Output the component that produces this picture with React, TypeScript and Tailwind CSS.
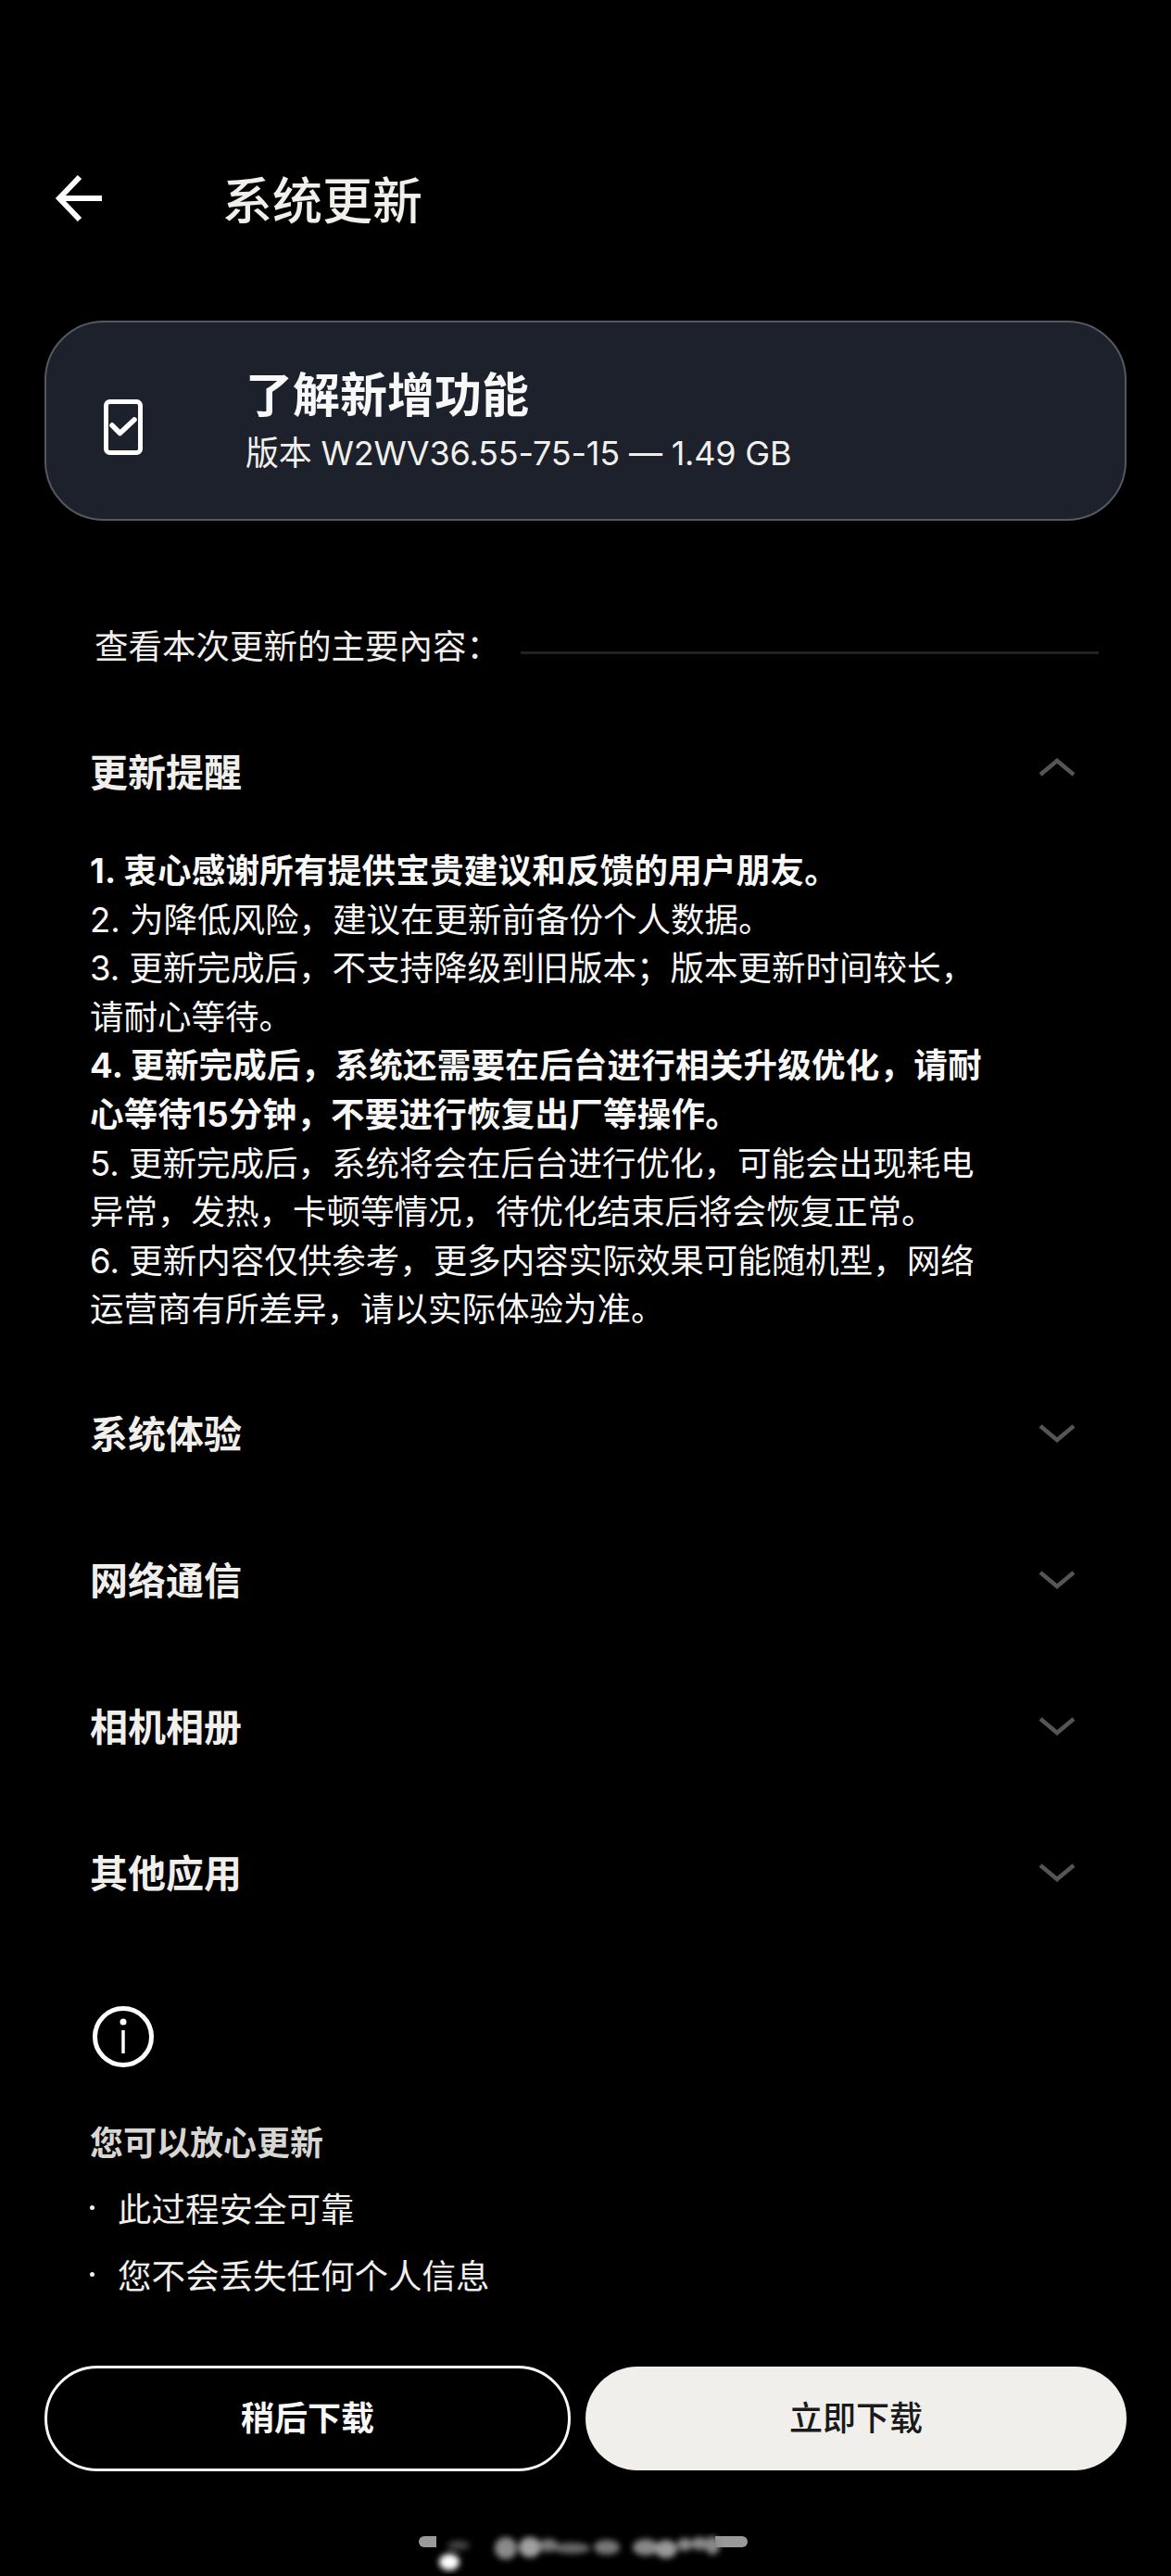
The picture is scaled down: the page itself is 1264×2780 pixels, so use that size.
import React from "react";

const font = { fontFamily: '"Inter", "Noto Sans CJK SC", sans-serif' };

function Chevron({ up }: { up?: boolean }) {
  return (
    <svg className={up ? "mb-[12px]" : "mb-[2px]"} width="40" height="22" viewBox="0 0 40 22" fill="none" stroke="#555555" strokeWidth="4.5">
      <path d={up ? "M2 19 L20 4 L38 19" : "M2 3 L20 18 L38 3"} />
    </svg>
  );
}

function Section({ title, up }: { title: string; up?: boolean }) {
  return (
    <div className="flex h-[158px] items-center justify-between pl-[97px] pr-[103px]">
      <span className="text-[41px] leading-[56px] font-semibold text-[#f1efec]">{title}</span>
      <Chevron up={up} />
    </div>
  );
}

const lines: [string, boolean][] = [
  ["1. 衷心感谢所有提供宝贵建议和反馈的用户朋友。", true],
  ["2. 为降低风险，建议在更新前备份个人数据。", false],
  ["3. 更新完成后，不支持降级到旧版本；版本更新时间较长，请耐心等待。", false],
  ["4. 更新完成后，系统还需要在后台进行相关升级优化，请耐心等待15分钟，不要进行恢复出厂等操作。", true],
  ["5. 更新完成后，系统将会在后台进行优化，可能会出现耗电异常，发热，卡顿等情况，待优化结束后将会恢复正常。", false],
  ["6. 更新内容仅供参考，更多内容实际效果可能随机型，网络运营商有所差异，请以实际体验为准。", false],
];

export default function App() {
  return (
    <div className="flex h-[2780px] w-[1264px] flex-col overflow-hidden bg-black text-white" style={font}>
      <header className="flex h-[346px] items-start pt-[186px]">
        <svg className="ml-[58px]" width="54" height="56" viewBox="0 0 54 56" fill="none" stroke="#ffffff" strokeWidth="6">
          <path d="M28 5 L6 28 L28 51 M6 28 H52" />
        </svg>
        <h1 className="mt-[2px] ml-[128px] text-[54px] leading-[60px] font-medium text-[#f1efec]">系统更新</h1>
      </header>

      <div className="mx-[48px] flex h-[216px] items-center rounded-[64px] border-2 border-[#55585e] bg-[#1c212b]">
        <svg className="mt-[14px] ml-[62px]" width="42" height="60" viewBox="0 0 42 60" fill="none" stroke="#ffffff">
          <rect x="2.5" y="2.5" width="37" height="55" rx="4" strokeWidth="5" />
          <path d="M9 28 L17.5 36.5 L33 22" strokeWidth="5.5" strokeLinecap="round" strokeLinejoin="round" />
        </svg>
        <div className="mt-[3px] ml-[111px]">
          <div className="text-[51px] leading-[62px] font-bold text-[#f8f8f8]">了解新增功能</div>
          <div className="mt-[5px] text-[36px] leading-[52px] tracking-[-0.2px] text-[#f1efec]">版本 W2WV36.55-75-15 — 1.49 GB</div>
        </div>
      </div>

      <div className="mt-[110px] flex h-[52px] items-center pl-[102px] pr-[78px]">
        <span className="text-[36.5px] leading-[52px] text-[#f1efec]">查看本次更新的主要內容：</span>
        <div className="mt-[12px] ml-[22px] h-[3px] flex-1 bg-[#222222]" />
      </div>

      <div className="mt-[31px]">
        <Section title="更新提醒" up />
      </div>

      <div className="mt-[1px] w-[1070px] pl-[97px] text-[36.5px] leading-[52.6px] text-[#f8f8f8]">
        {lines.map(([text, bold]) => (
          <p key={text} className={bold ? "font-bold tracking-[0.25px]" : "font-normal"}>
            {text}
          </p>
        ))}
      </div>

      <div className="mt-[29px]">
        <Section title="系统体验" />
        <Section title="网络通信" />
        <Section title="相机相册" />
        <Section title="其他应用" />
      </div>

      <div className="mt-[63px] pl-[97px]">
        <svg className="ml-[2px]" width="68" height="68" viewBox="0 0 68 68" fill="none" stroke="#ffffff">
          <circle cx="34" cy="34" r="30.5" strokeWidth="5" />
          <path d="M34 27 V52" strokeWidth="3.5" />
          <circle cx="34" cy="18" r="3.5" fill="#ffffff" stroke="none" />
        </svg>
        <div className="mt-[55px] text-[36px] leading-[52px] font-semibold text-[#d8d6d3]">您可以放心更新</div>
        <ul className="mt-[20px] flex flex-col gap-[20px] text-[36.5px] leading-[52px] text-[#f1efec]">
          <li className="flex items-center">
            <span className="mb-[4px] h-[5px] w-[5px] rounded-full bg-[#f1efec]" />
            <span className="ml-[25px]">此过程安全可靠</span>
          </li>
          <li className="flex items-center">
            <span className="mb-[4px] h-[5px] w-[5px] rounded-full bg-[#f1efec]" />
            <span className="ml-[25px]">您不会丢失任何个人信息</span>
          </li>
        </ul>
      </div>

      <div className="mx-[48px] mt-[70px] flex items-center gap-[16px]">
        <button className="flex h-[114px] w-[568px] items-center justify-center rounded-[57px] border-[3px] border-[#f8f8f8] text-[36px] font-semibold text-[#f8f8f8]">
          稍后下载
        </button>
        <button className="flex h-[112px] flex-1 items-center justify-center rounded-[56px] bg-[#f1efec] text-[36px] font-medium text-[#1a1a1a]">
          立即下载
        </button>
      </div>

      <svg className="mx-auto mt-[62px]" width="370" height="50" viewBox="0 0 370 50" fill="#9a9a9a">
        <defs>
          <filter id="smudge">
            <feGaussianBlur stdDeviation="3" />
          </filter>
        </defs>
        <path d="M11 8 H24 V20 H11 A6 6 0 0 1 11 8 Z" />
        <path d="M325 8 H354 A6 6 0 0 1 354 20 H325 Z" />
        <g filter="url(#smudge)">
          <ellipse cx="38" cy="36" rx="11" ry="9" fill="#ffffff" />
          <ellipse cx="48" cy="18" rx="12" ry="5" fill="#444444" />
          <ellipse cx="99" cy="21" rx="12" ry="12" fill="#8a8a8a" />
          <ellipse cx="125" cy="20" rx="12" ry="11" fill="#a0a0a0" />
          <ellipse cx="145" cy="18" rx="11" ry="7" fill="#777777" />
          <ellipse cx="170" cy="21" rx="20" ry="6" fill="#666666" />
          <ellipse cx="208" cy="20" rx="14" ry="8" fill="#777777" />
          <ellipse cx="250" cy="20" rx="14" ry="9" fill="#888888" />
          <ellipse cx="272" cy="22" rx="12" ry="10" fill="#999999" />
          <ellipse cx="292" cy="17" rx="8" ry="7" fill="#888888" />
          <ellipse cx="308" cy="16" rx="9" ry="7" fill="#888888" />
          <ellipse cx="322" cy="18" rx="8" ry="10" fill="#888888" />
        </g>
      </svg>
    </div>
  );
}
